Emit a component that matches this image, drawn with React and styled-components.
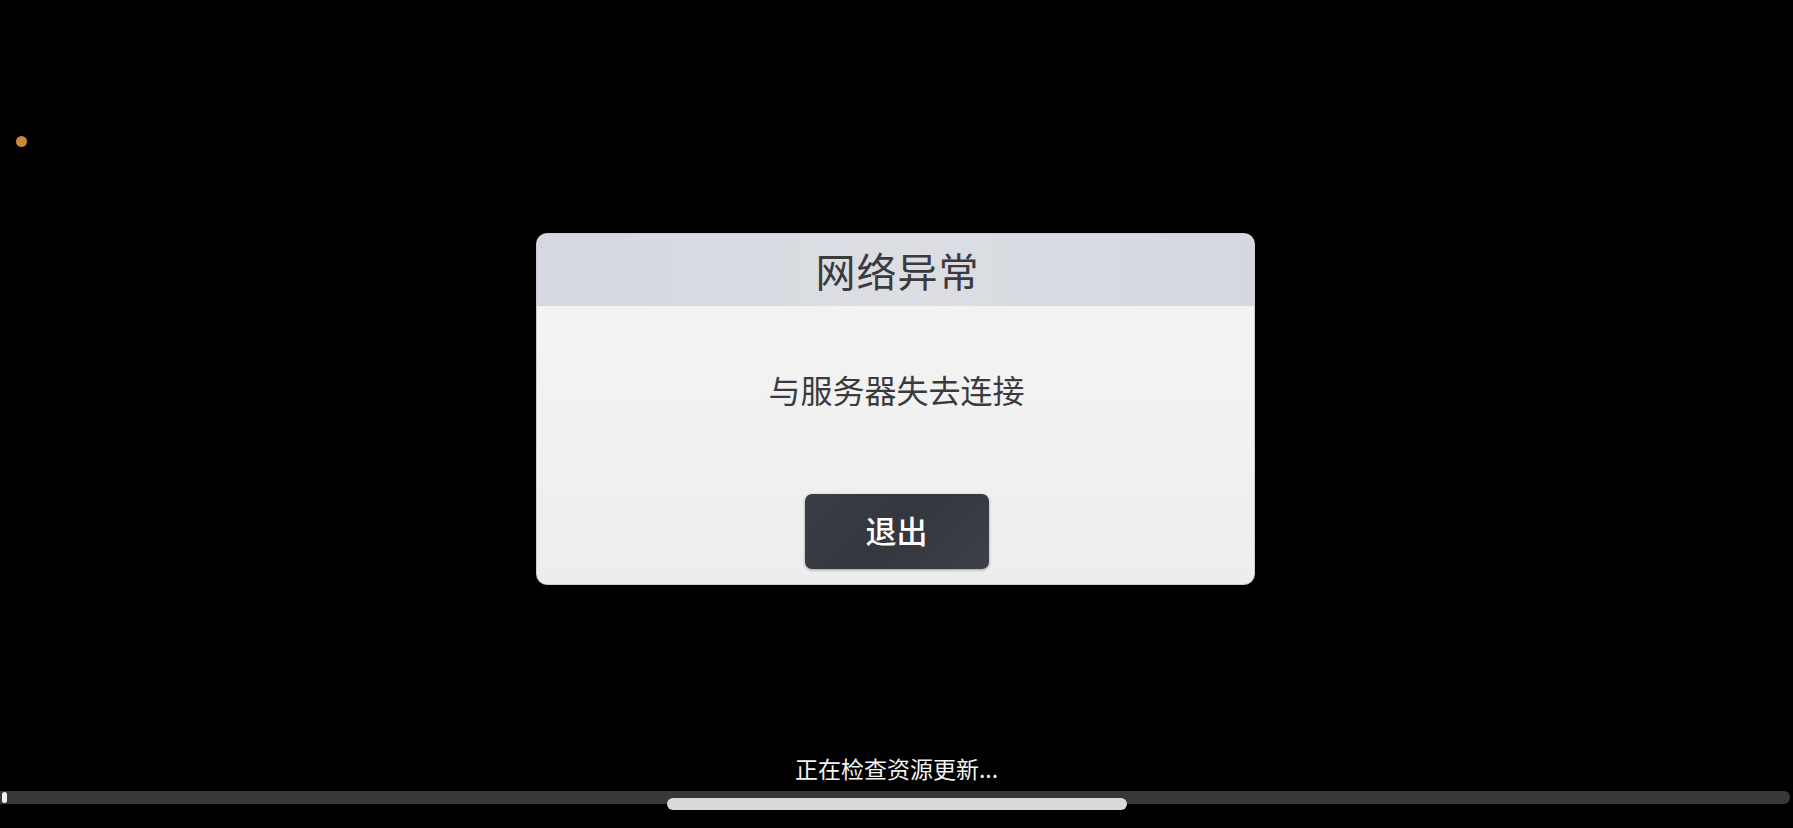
import React from "react";
import styled, { createGlobalStyle } from "styled-components";

const Global = createGlobalStyle`
  html, body { margin: 0; padding: 0; background: #000; }
  body { font-family: "Noto Sans CJK SC", "Noto Sans", sans-serif; }
`;

const Screen = styled.div`
  width: 1793px;
  height: 828px;
  background: #000;
  display: flex;
  flex-direction: column;
  overflow: hidden;
`;

const Dot = styled.div`
  width: 11px;
  height: 11px;
  border-radius: 50%;
  background: #c98a35;
  margin: 136px 0 0 16px;
`;

const Dialog = styled.div`
  align-self: center;
  margin-top: 86px;
  margin-right: 2px;
  width: 719px;
  height: 352px;
  box-sizing: border-box;
  border-radius: 11px;
  border: 1px solid #c9cbd0;
  background: linear-gradient(180deg, #f4f4f4 0%, #f1f1f1 60%, #ededed 100%);
  overflow: hidden;
  display: flex;
  flex-direction: column;
`;

const Header = styled.div`
  height: 72px;
  flex: none;
  display: flex;
  align-items: center;
  justify-content: center;
  background: linear-gradient(90deg, #d5d8df 0%, #dcdee4 50%, #d5d8df 100%);
`;

const Title = styled.div`
  font-size: 40px;
  font-weight: 400;
  color: #3b3b3e;
  letter-spacing: 1px;
  padding-left: 4px;
`;

const Body = styled.div`
  flex: 1;
  display: flex;
  flex-direction: column;
  align-items: center;
  padding-top: 63px;
`;

const Message = styled.div`
  font-size: 32px;
  line-height: 40px;
  color: #3b3b3e;
  padding-left: 2px;
`;

const ExitButton = styled.button`
  margin-top: 85px;
  margin-left: 2px;
  width: 184px;
  height: 75px;
  border: none;
  border-radius: 7px;
  background: linear-gradient(135deg, #3a3d44 0%, #34373d 50%, #3d4047 100%);
  box-shadow: 0 1px 3px rgba(0, 0, 0, 0.35);
  color: #fff;
  font-family: "Noto Sans CJK SC", sans-serif;
  font-size: 31px;
  font-weight: 500;
  display: flex;
  align-items: center;
  justify-content: center;
  padding: 0 0 4px;
`;

const Spacer = styled.div`
  flex: 1;
`;

const Status = styled.div`
  text-align: center;
  color: #f2f2f2;
  font-size: 23px;
  line-height: 30px;
  margin-bottom: 8px;
`;

const Track = styled.div`
  position: relative;
  height: 13px;
  width: 1790px;
  background: #383838;
  border-radius: 0 6px 6px 0;
  margin-bottom: 24px;
`;

const Knob = styled.div`
  position: absolute;
  left: 2px;
  top: 1px;
  width: 5px;
  height: 11px;
  border-radius: 3px;
  background: #f2f2f2;
`;

const Thumb = styled.div`
  position: absolute;
  left: 667px;
  top: 7px;
  width: 460px;
  height: 12px;
  border-radius: 6px;
  background: #d9d9d9;
`;

export default function App() {
  return (
    <>
      <Global />
      <Screen>
        <Dot />
        <Dialog>
          <Header>
            <Title>网络异常</Title>
          </Header>
          <Body>
            <Message>与服务器失去连接</Message>
            <ExitButton>退出</ExitButton>
          </Body>
        </Dialog>
        <Spacer />
        <Status>正在检查资源更新...</Status>
        <Track>
          <Knob />
          <Thumb />
        </Track>
      </Screen>
    </>
  );
}
